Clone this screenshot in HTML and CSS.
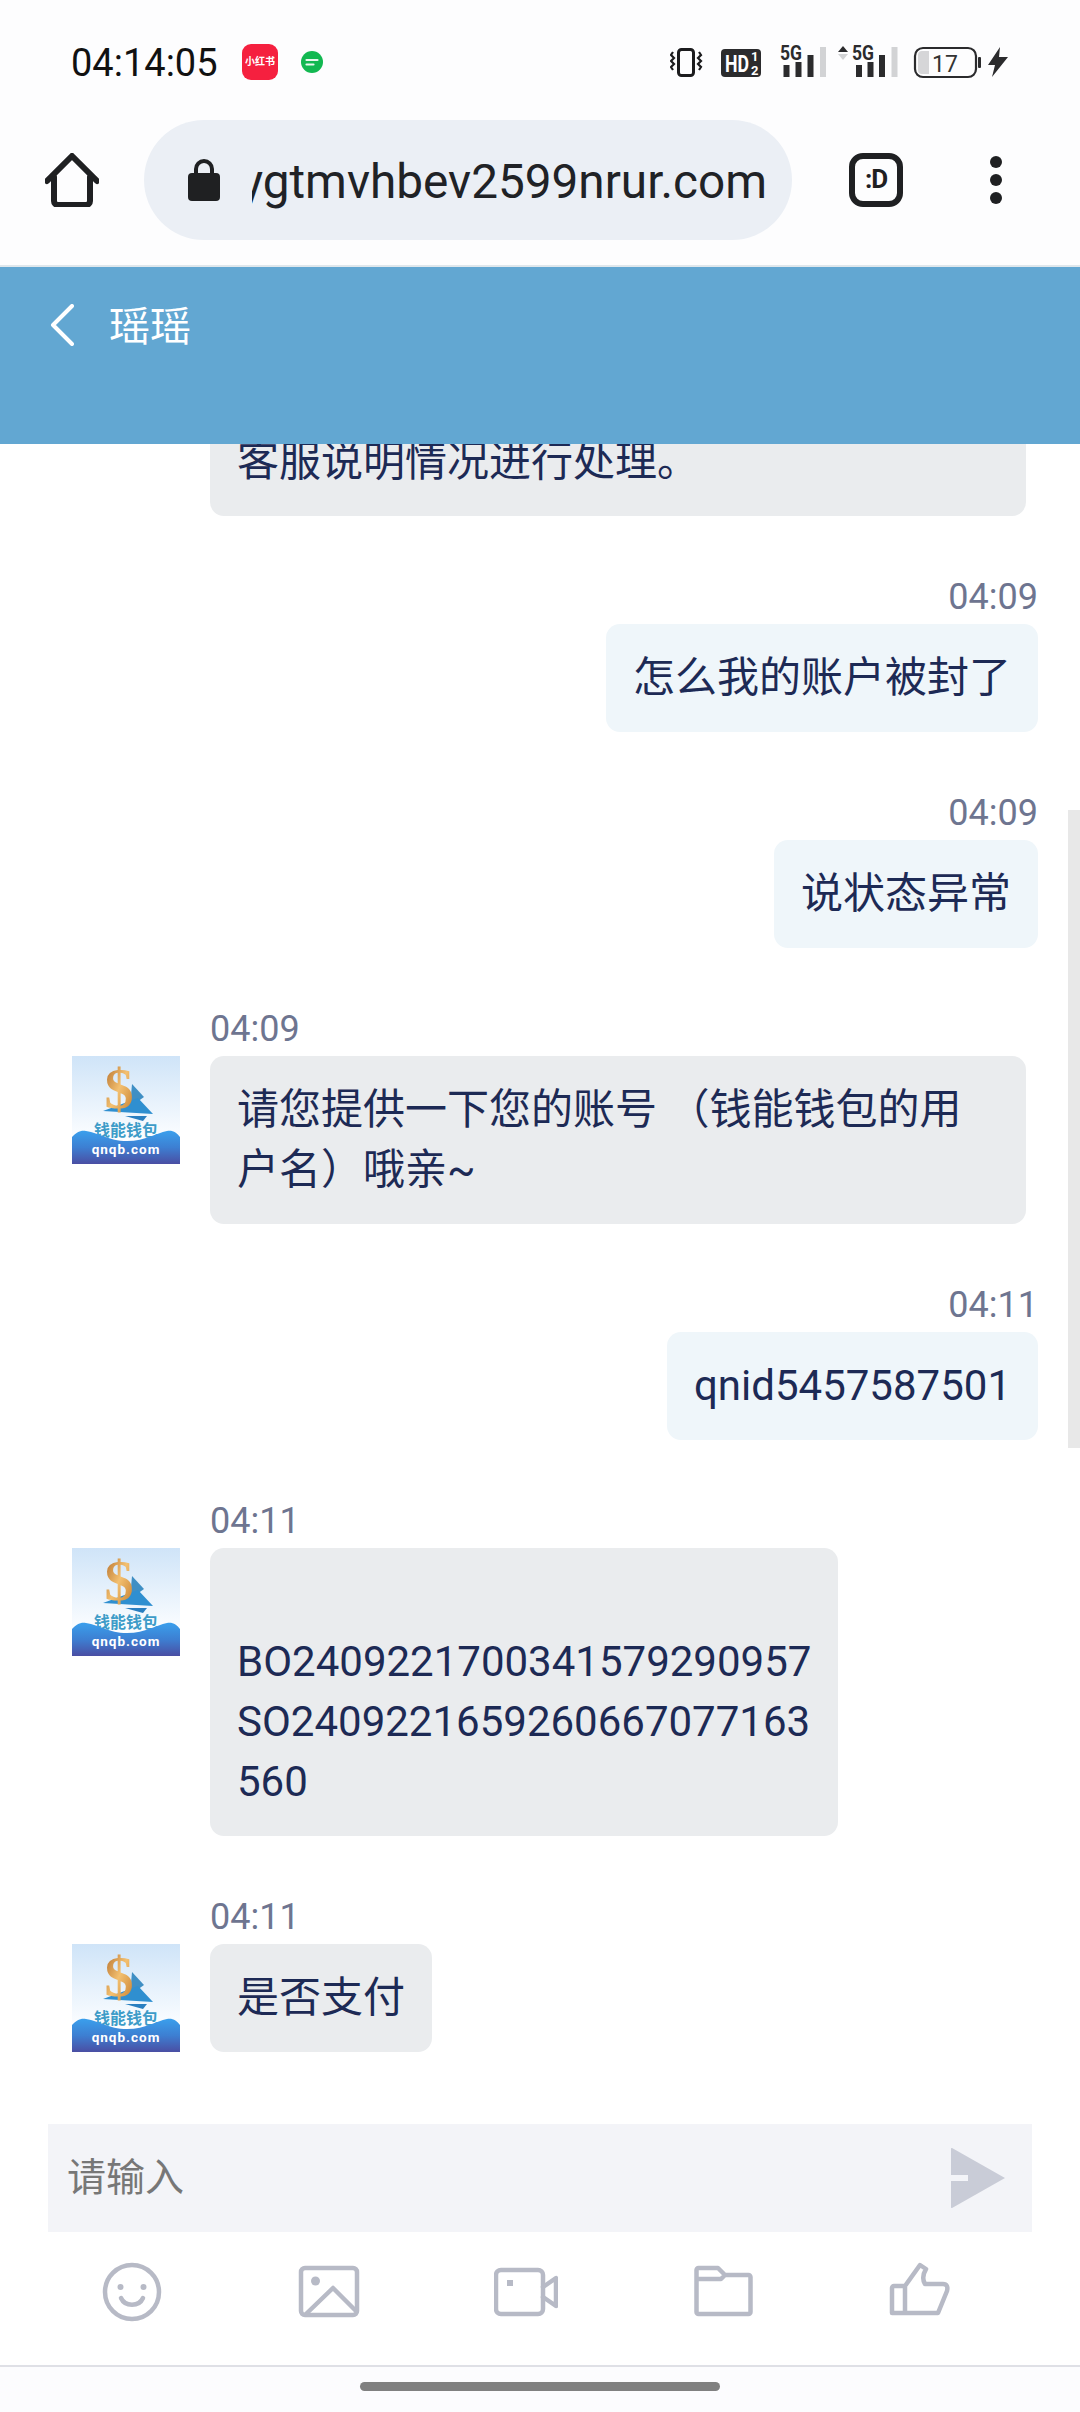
FILE: index.html
```html
<!DOCTYPE html>
<html lang="zh-CN">
<head>
    <meta charset="UTF-8">
    <meta name="viewport" content="width=device-width, initial-scale=1.0">
    <title>瑶瑶</title>
    <link rel="stylesheet" href="styles.css">
</head>
<body>
<div class="page">
    <div class="status-bar">
        <span class="clock">04:14:05</span>
        <span class="app-red">小红书</span>
        <span class="app-msg">
            <svg width="24" height="24" viewBox="0 0 24 24"><circle cx="12" cy="12" r="11" fill="#12b851"/><path d="M6.500 10h11M6.500 14.500h7" stroke="#e8f7ee" stroke-width="2.200" stroke-linecap="round"/></svg>
        </span>
        <svg class="status-icons" width="338" height="36" viewBox="670 44 338 36">
            <!-- vibrate -->
            <rect x="678.500" y="49.500" width="15" height="26" rx="3" fill="none" stroke="#1c1c1e" stroke-width="3"/>
            <path d="M673 52l-2 3 3 3-3 3 3 3-3 3 2 3M699 52l2 3-3 3 3 3-3 3 3 3-2 3" fill="none" stroke="#1c1c1e" stroke-width="2.200"/>
            <!-- hd -->
            <rect x="721" y="49" width="40" height="28" rx="4" fill="#2b2b2d"/>
            <text x="725" y="72" class="hd-text" textLength="24" lengthAdjust="spacingAndGlyphs">HD</text>
            <text x="751" y="61" class="hd-small">1</text>
            <text x="751" y="75" class="hd-small">2</text>
            <!-- sim 1 -->
            <text x="780" y="60" class="net-text" textLength="22" lengthAdjust="spacingAndGlyphs">5G</text>
            <rect x="783.500" y="65" width="6" height="12" fill="#2b2b2d"/>
            <rect x="795.500" y="62" width="6" height="15" fill="#2b2b2d"/>
            <rect x="807.500" y="55" width="6" height="22" fill="#2b2b2d"/>
            <rect x="820" y="47" width="6" height="30" fill="#d2d3d5"/>
            <!-- sim 2 -->
            <path d="M838 52l5-6 5 6z" fill="#2b2b2d"/>
            <path d="M838 54l5 6 5-6z" fill="#d2d3d5"/>
            <text x="852" y="60" class="net-text" textLength="22" lengthAdjust="spacingAndGlyphs">5G</text>
            <rect x="856" y="65" width="6" height="12" fill="#2b2b2d"/>
            <rect x="867.500" y="62" width="6" height="15" fill="#2b2b2d"/>
            <rect x="879" y="55" width="6" height="22" fill="#2b2b2d"/>
            <rect x="891.500" y="47" width="6" height="30" fill="#d2d3d5"/>
            <!-- battery -->
            <rect x="915" y="48" width="61" height="29" rx="8" fill="none" stroke="#2b2b2d" stroke-width="2.200"/>
            <path d="M918 55a4 4 0 0 1 4-4h7v23h-7a4 4 0 0 1-4-4z" fill="#d6d6d8"/>
            <rect x="978" y="57" width="3" height="11" rx="1" fill="#2b2b2d"/>
            <text x="932" y="72" class="batt-text">17</text>
            <path d="M1000 47l-12 18h7l-3 12 16-20h-9z" fill="#2b2b2d"/>
        </svg>
    </div>

    <div class="toolbar">
        <svg class="home-icon" width="54" height="54" viewBox="0 0 54 54"><path d="M2 28L27 3l25 25M9 24v24a4 4 0 0 0 4 4h28a4 4 0 0 0 4-4V24" fill="none" stroke="#1f2022" stroke-width="6" stroke-linecap="round" stroke-linejoin="round"/></svg>
        <div class="url-pill">
            <svg class="lock-icon" width="32" height="42" viewBox="0 0 32 42"><path d="M8 17v-7a8 8 0 0 1 16 0v7" fill="none" stroke="#1f2022" stroke-width="4"/><rect x="0" y="14" width="32" height="28" rx="4" fill="#1f2022"/></svg>
            <div class="url-text"><span>qnaygtmvhbev2599nrur.com</span></div>
        </div>
        <div class="tab-count">:D</div>
        <div class="more-dots"><i></i><i></i><i></i></div>
    </div>

    <div class="chat-header">
        <svg width="24" height="42" viewBox="0 0 24 42"><path d="M22 2L3 21l19 19" fill="none" stroke="#fff" stroke-width="4" stroke-linecap="round" stroke-linejoin="round"/></svg>
        <span class="chat-title">瑶瑶</span>
    </div>

    <div class="chat-wrap">
        <div class="scroll-thumb"></div>
        <div class="chat">
            <div class="msg left">
                <div class="avatar-gap"></div>
                <div class="msg-body">
                    <div class="bubble full">请您提供一下您的账号或者订单号，<br>客服说明情况进行处理。</div>
                </div>
            </div>

            <div class="msg right">
                <div class="msg-body">
                    <div class="msg-time">04:09</div>
                    <div class="bubble">怎么我的账户被封了</div>
                </div>
            </div>

            <div class="msg right">
                <div class="msg-body">
                    <div class="msg-time">04:09</div>
                    <div class="bubble">说状态异常</div>
                </div>
            </div>

            <div class="msg left">
                <svg class="avatar" viewBox="0 0 108 108">
                    <defs>
                        <linearGradient id="skyFill" x1="0" y1="0" x2="0" y2="1"><stop offset="0" stop-color="#cfe4f8"/><stop offset="0.75" stop-color="#fbfdff"/></linearGradient>
                        <linearGradient id="seaFill" x1="0" y1="0" x2="0" y2="1"><stop offset="0" stop-color="#3a9fec"/><stop offset="0.5" stop-color="#3d7fd2"/><stop offset="1" stop-color="#4a4ea3"/></linearGradient>
                        <linearGradient id="goldFill" x1="0" y1="0" x2="1" y2="1"><stop offset="0" stop-color="#a9601f"/><stop offset="0.5" stop-color="#f3c070"/><stop offset="1" stop-color="#c07524"/></linearGradient>
                        <symbol id="qnqbLogo" viewBox="0 0 108 108">
                            <rect width="108" height="108" fill="url(#skyFill)"/>
                            <path d="M60 28l12 13-14 10z" fill="#3f8fc4"/>
                            <path d="M31 55l35-13 15 16z" fill="#2f8fd0"/>
                            <text x="47" y="52" class="logo-dollar" fill="url(#goldFill)">$</text>
                            <path d="M53 60h22l-4 5z" fill="#2a7fc0"/>
                            <text x="54" y="80" class="logo-cn">钱能钱包</text>
                            <path d="M0 81C4 77 8 74 14 75C28 77 36 85 55 85C74 85 84 77 95 75C101 74 105 77 108 81V108H0z" fill="url(#seaFill)"/>
                            <text x="54" y="98" class="logo-en">qnqb.com</text>
                        </symbol>
                    </defs>
                    <use href="#qnqbLogo"/>
                </svg>
                <div class="msg-body">
                    <div class="msg-time">04:09</div>
                    <div class="bubble full">请您提供一下您的账号 （钱能钱包的用<br>户名）哦亲~</div>
                </div>
            </div>

            <div class="msg right">
                <div class="msg-body">
                    <div class="msg-time">04:11</div>
                    <div class="bubble">qnid5457587501</div>
                </div>
            </div>

            <div class="msg left">
                <svg class="avatar" viewBox="0 0 108 108"><use href="#qnqbLogo"/></svg>
                <div class="msg-body">
                    <div class="msg-time">04:11</div>
                    <div class="bubble"><br>BO2409221700341579290957<br>SO2409221659260667077163<br>560</div>
                </div>
            </div>

            <div class="msg left">
                <svg class="avatar" viewBox="0 0 108 108"><use href="#qnqbLogo"/></svg>
                <div class="msg-body">
                    <div class="msg-time">04:11</div>
                    <div class="bubble">是否支付</div>
                </div>
            </div>
        </div>
    </div>

    <div class="input-box">
        <span class="placeholder">请输入</span>
        <svg width="54" height="60" viewBox="0 0 54 60"><path d="M0 1a1 1 0 0 1 1.500-.8L54 30 1.500 59.800A1 1 0 0 1 0 59V33h17v-6H0z" fill="#c9ccd7"/></svg>
    </div>

    <div class="tool-row">
        <svg class="tool-icon" viewBox="0 0 64 64"><circle cx="32" cy="32" r="27" class="line"/><circle cx="20.500" cy="27" r="3" class="dot"/><circle cx="43.500" cy="27" r="3" class="dot"/><path d="M21 38c4 9 18 9 22 0" class="line"/></svg>
        <svg class="tool-icon" viewBox="0 0 64 64"><rect x="4" y="8" width="56" height="47" rx="4" class="line"/><circle cx="18.500" cy="21" r="4.500" class="dot"/><path d="M9 54l27-26 23 23" class="line"/></svg>
        <svg class="tool-icon" viewBox="0 0 64 64"><rect x="2" y="10" width="47" height="44" rx="5" class="line"/><rect x="13" y="20" width="6" height="6" class="dot"/><path d="M49 27l13-9v28l-13-9" class="line"/></svg>
        <svg class="tool-icon" viewBox="0 0 64 64"><path d="M5.500 52V10a2 2 0 0 1 2-2H27l7 7h23.500a2 2 0 0 1 2 2v35a2 2 0 0 1-2 2H7.500a2 2 0 0 1-2-2zM5.500 19H30l4-4" class="line"/></svg>
        <svg class="tool-icon" viewBox="0 0 64 64"><path d="M17 26L32 5l6 4c-3 5-4 10-1 15h18c4 0 5 3 4 7l-9 22H4V28a2 2 0 0 1 2-2h11v27" class="line"/></svg>
    </div>

    <div class="nav-bar"><div class="home-pill"></div></div>
</div>
</body>
</html>
```

FILE: styles.css
```css
* {
    box-sizing: border-box;
}

body {
    margin: 0;
    background: #fff;
    font-family: Roboto, "Noto Sans CJK SC", sans-serif;
}

.page {
    width: 1080px;
    height: 2412px;
    display: flex;
    flex-direction: column;
    overflow: hidden;
}

/* status bar */
.status-bar {
    height: 120px;
    flex: none;
    display: flex;
    align-items: flex-start;
    padding: 44px 72px 0 71px;
    background: #fdfdfe;
}

.clock {
    font-size: 38px;
    line-height: 38px;
    color: #111;
    width: 171px;
}

.app-red {
    width: 36px;
    height: 36px;
    border-radius: 9px;
    background: #f5203f;
    color: #fff;
    font-size: 10px;
    font-weight: 700;
    line-height: 36px;
    text-align: center;
    white-space: nowrap;
}

.app-msg {
    width: 34px;
    height: 36px;
    margin-left: 17px;
    display: flex;
    align-items: center;
    justify-content: center;
}

.status-icons {
    margin-left: auto;
}

.hd-text {
    font-size: 23px;
    font-weight: 700;
    fill: #fff;
}

.hd-small {
    font-size: 13px;
    font-weight: 700;
    fill: #fff;
}

.net-text {
    font-size: 21px;
    font-weight: 700;
    fill: #2b2b2d;
}

.batt-text {
    font-size: 23px;
    fill: #333;
}

/* browser toolbar */
.toolbar {
    height: 147px;
    flex: none;
    display: flex;
    align-items: flex-start;
    padding-left: 45px;
    background: #fdfdfe;
    border-bottom: 2px solid #dfe7ec;
}

.home-icon {
    margin-top: 33px;
}

.url-pill {
    width: 648px;
    height: 120px;
    margin-left: 45px;
    border-radius: 60px;
    background: #ebeff5;
    display: flex;
    align-items: center;
    padding-left: 44px;
}

.lock-icon {
    flex: none;
}

.url-text {
    width: 515px;
    margin: 4px 0 0 32px;
    display: flex;
    justify-content: flex-end;
    overflow: hidden;
    font-size: 47.700px;
    line-height: 64px;
    color: #202226;
    white-space: nowrap;
}

.tab-count {
    width: 54px;
    height: 54px;
    margin: 33px 0 0 57px;
    border: 6px solid #1f2022;
    border-radius: 14px;
    font-size: 26px;
    font-weight: 700;
    letter-spacing: -1px;
    line-height: 40px;
    text-align: center;
    color: #1f2022;
}

.more-dots {
    margin: 36px 0 0 87px;
    display: flex;
    flex-direction: column;
    gap: 6px;
}

.more-dots i {
    display: block;
    width: 12px;
    height: 12px;
    border-radius: 50%;
    background: #1f2022;
}

/* chat header */
.chat-header {
    height: 177px;
    flex: none;
    background: #62a7d2;
    display: flex;
    align-items: flex-start;
    padding: 37px 0 0 50px;
    gap: 35px;
}

.chat-title {
    font-size: 41px;
    line-height: 46px;
    color: #fff;
}

/* messages */
.chat-wrap {
    flex: 1;
    min-height: 0;
    display: flex;
    overflow: hidden;
    position: relative;
    background: #fff;
}

.scroll-thumb {
    position: absolute;
    right: 0;
    top: 366px;
    width: 12px;
    height: 638px;
    background: #e8e8e8;
}

.chat {
    flex: 1;
    display: flex;
    flex-direction: column;
    justify-content: flex-end;
    gap: 58px;
    padding: 0 42px 72px 72px;
}

.msg {
    display: flex;
    align-items: flex-end;
    flex: none;
}

.msg.right {
    justify-content: flex-end;
}

.msg.left {
    gap: 30px;
}

.msg.left .avatar {
    align-self: flex-start;
    margin-top: 50px;
}

.avatar, .avatar-gap {
    width: 108px;
    height: 108px;
    flex: none;
}

.msg-body {
    display: flex;
    flex-direction: column;
}

.msg.right .msg-body {
    align-items: flex-end;
}

.msg.left .msg-body {
    align-items: flex-start;
}

.msg-time {
    font-size: 36px;
    line-height: 47px;
    margin-bottom: 3px;
    color: #6e7590;
}

.bubble {
    padding: 24px 27px;
    border-radius: 14px;
    font-size: 42px;
    line-height: 60px;
    color: #1d2a55;
}

.msg.right .bubble {
    background: #eff6fa;
}

.msg.left .bubble {
    background: #eaecee;
}

.bubble.full {
    width: 816px;
}

.logo-dollar {
    font-family: "Liberation Serif", serif;
    font-size: 58px;
    font-weight: 700;
    text-anchor: middle;
}

.logo-cn {
    font-size: 16px;
    font-weight: 700;
    fill: #3d9cc8;
    text-anchor: middle;
}

.logo-en {
    font-size: 13.500px;
    font-weight: 700;
    fill: #fff;
    letter-spacing: 1px;
    text-anchor: middle;
}

/* input */
.input-box {
    height: 108px;
    flex: none;
    margin: 0 48px;
    padding: 0 27px 0 19px;
    background: #f3f4f8;
    display: flex;
    align-items: center;
    justify-content: space-between;
}

.placeholder {
    font-size: 39px;
    line-height: 50px;
    margin-bottom: 1px;
    color: #777;
}

.tool-row {
    height: 133px;
    flex: none;
    padding: 28px 62px 0 33px;
    display: grid;
    grid-template-columns: repeat(5, 1fr);
    justify-items: center;
    align-items: start;
}

.tool-icon {
    width: 64px;
    height: 64px;
}

.tool-icon .line {
    fill: none;
    stroke: #b7bac6;
    stroke-width: 4.500;
    stroke-linejoin: round;
    stroke-linecap: round;
}

.tool-icon .dot {
    fill: #b7bac6;
}

.nav-bar {
    height: 47px;
    flex: none;
    background: #fcfcfe;
    border-top: 2px solid #dfe0e6;
    padding-top: 15px;
}

.home-pill {
    width: 360px;
    height: 9px;
    margin: 0 auto;
    border-radius: 5px;
    background: #808080;
}
```
